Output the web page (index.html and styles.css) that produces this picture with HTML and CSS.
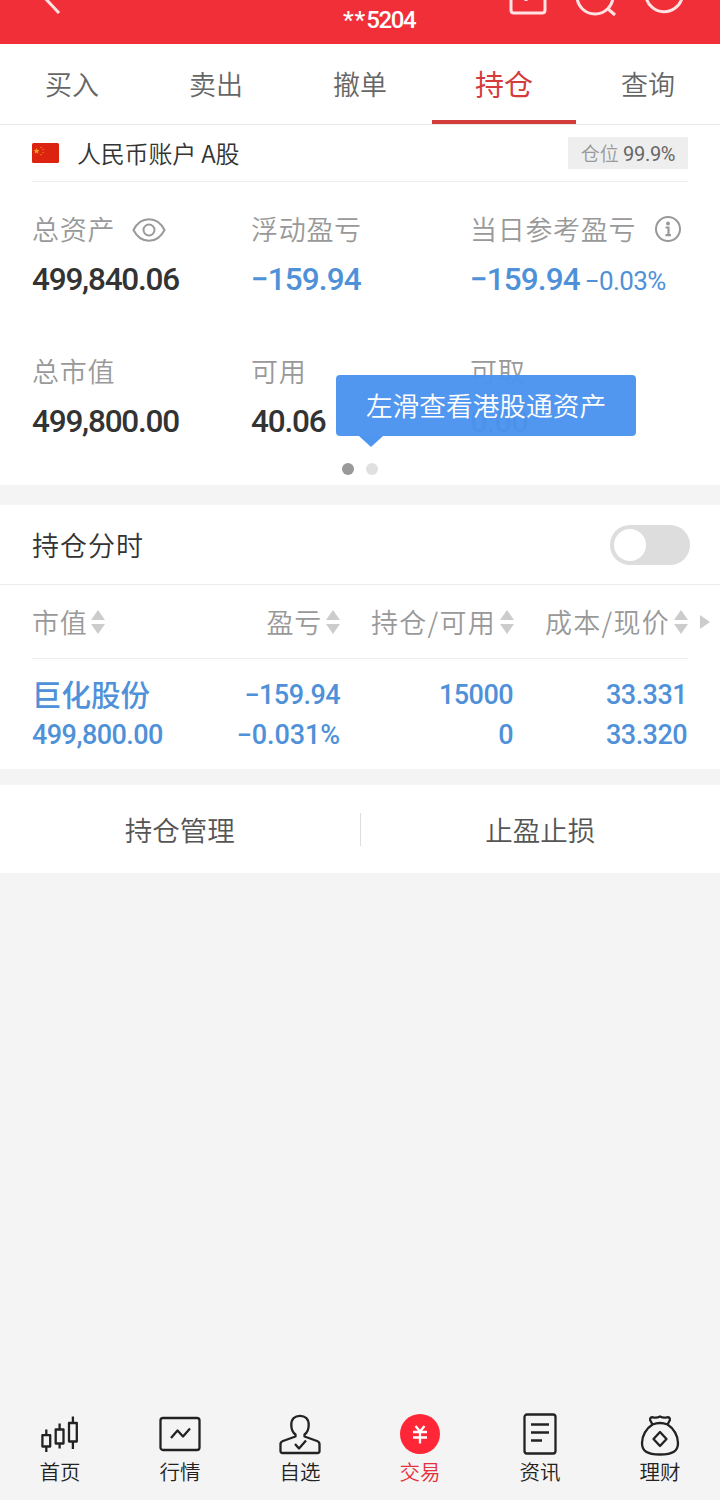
FILE: index.html
```html
<!DOCTYPE html>
<html lang="zh-CN">
<head>
<meta charset="utf-8">
<title>持仓</title>
<link rel="stylesheet" href="styles.css">
</head>
<body>
<div class="app">
  <header class="header">
    <svg class="header-art" width="720" height="44" viewBox="0 0 720 44" fill="none" stroke="#ffe3e3" stroke-width="3">
      <path d="M43-4L59 13"/>
      <path d="M511-5V10q0 3 3 3H542q3 0 3-3V-5M526 0v1"/>
      <circle cx="595" cy="-4" r="18"/><path d="M607 8l8 7"/>
      <path d="M646-3a18.500 18.500 0 0 0 36 1"/>
    </svg>
    <span class="account-no"><span class="stars">**</span>5204</span>
  </header>
  <nav class="tabs">
    <a class="tab">买入</a><a class="tab">卖出</a><a class="tab">撤单</a><a class="tab active">持仓</a><a class="tab">查询</a>
  </nav>
  <section class="assets">
    <div class="account">
      <svg class="flag" width="27" height="20" viewBox="0 0 27 20"><rect width="27" height="20" rx="1.500" fill="#dc2310"/><path d="M4.500 5l.9 2.100 2.300.1-1.800 1.400.6 2.200-2-1.200-1.900 1.200.6-2.200L1.500 7.200l2.200-.1z" fill="#f5a31a"/><g fill="#e77b19"><circle cx="9" cy="4.500" r=".8"/><circle cx="11.200" cy="6.500" r=".8"/><circle cx="11.200" cy="9.500" r=".8"/><circle cx="9" cy="11.800" r=".8"/></g></svg>
      <span class="account-name">人民币账户 A股</span>
      <span class="position">仓位 <b class="position-value">99.9%</b></span>
    </div>
    <div class="stats">
      <div class="stat"><div class="label"><span>总资产</span><svg class="eye" width="34" height="26" viewBox="0 0 34 26" fill="none" stroke="#999" stroke-width="2"><path d="M1.500 13C5 6 10.500 2.200 17 2.200S29 6 32.500 13C29 20 23.500 23.800 17 23.800S5 20 1.500 13z"/><circle cx="17" cy="13" r="5.500"/></svg></div><div class="value">499,840.06</div></div>
      <div class="stat"><div class="label"><span>浮动盈亏</span></div><div class="value blue">−159.94</div></div>
      <div class="stat"><div class="label"><span>当日参考盈亏</span><svg class="info" width="28" height="28" viewBox="0 0 28 28" fill="none" stroke="#999" stroke-width="2"><circle cx="14" cy="14" r="12"/><circle cx="14" cy="8.500" r="2" fill="#999" stroke="none"/><path d="M11.500 12.500H14.500V20M11.500 20.200h5.500" stroke-width="2.200"/></svg></div><div class="value blue">−159.94<span class="rate">−0.03%</span></div></div>
      <div class="stat"><div class="label"><span>总市值</span></div><div class="value">499,800.00</div></div>
      <div class="stat"><div class="label"><span>可用</span></div><div class="value">40.06</div></div>
      <div class="stat"><div class="label"><span>可取</span></div><div class="value covered">0.00</div></div>
    </div>
    <div class="dots"><i class="dot on"></i><i class="dot"></i></div>
    <div class="tooltip"><span>左滑查看港股通资产</span></div>
  </section>
  <section class="holdings">
    <div class="switch-row"><span>持仓分时</span><span class="switch"></span></div>
    <div class="columns">
      <span class="col">市值<svg class="sort" width="14" height="24" viewBox="0 0 14 24"><path d="M7 0l7 10H0zM0 14h14l-7 10z"/></svg></span>
      <span class="col">盈亏<svg class="sort" width="14" height="24" viewBox="0 0 14 24"><path d="M7 0l7 10H0zM0 14h14l-7 10z"/></svg></span>
      <span class="col wide">持仓/可用<svg class="sort" width="14" height="24" viewBox="0 0 14 24"><path d="M7 0l7 10H0zM0 14h14l-7 10z"/></svg></span>
      <span class="col wide">成本/现价<svg class="sort" width="14" height="24" viewBox="0 0 14 24"><path d="M7 0l7 10H0zM0 14h14l-7 10z"/></svg></span>
      <svg class="more" width="10" height="14" viewBox="0 0 10 14"><path d="M0 0l10 7-10 7z"/></svg>
    </div>
    <div class="stock">
      <span class="stock-name">巨化股份</span><span>−159.94</span><span>15000</span><span>33.331</span>
      <span>499,800.00</span><span class="percent">−0.031%</span><span>0</span><span>33.320</span>
    </div>
  </section>
  <section class="actions"><a class="action">持仓管理</a><a class="action">止盈止损</a></section>
  <nav class="bottom">
    <a class="item"><svg class="icon" width="44" height="44" viewBox="0 0 44 44"><path d="M4.400 23.200h7.800v11.300H4.400zM17.700 17.500h7.800v14h-7.800zM31 11h7.800v18.500H31zM8.300 17.500v5.700M8.300 34.500v5.500M21.600 11.500v6M21.600 31.500v5M34.900 4.500v6.500M34.900 29.500v7.500"/></svg>首页</a>
    <a class="item"><svg class="icon" width="44" height="44" viewBox="0 0 44 44"><rect x="2.500" y="6" width="39" height="32" rx="2.500"/><path d="M13 26l6.500-7.500 5.500 6 7-8"/></svg>行情</a>
    <a class="item"><svg class="icon" width="44" height="44" viewBox="0 0 44 44"><path d="M17.500 22.500C14 20 13.300 17 13.300 13c0-6 3.500-9.200 8.700-9.200s8.700 3.200 8.700 9.200c0 4-.7 7-4.200 9.500v2l12.500 4.500q2.500 1 2.500 3v7q0 2-2 2H4.500q-2 0-2-2v-7q0-2 2.500-3l12.500-4.500z"/><path d="M17 32l4 4.500 7-8"/></svg>自选</a>
    <a class="item current"><svg class="icon" width="44" height="44" viewBox="0 0 44 44"><circle cx="22" cy="22" r="20" fill="#ff2737" stroke="none"/><path d="M17.500 14l4.500 5.500 4.500-5.500M15 20h14M15 25.500h14M22 19.500v12" stroke="#fff"/></svg>交易</a>
    <a class="item"><svg class="icon" width="44" height="44" viewBox="0 0 44 44"><rect x="6.500" y="2.500" width="31" height="39" rx="2.500"/><path d="M13 12.500h18M13 20.500h18M13 28.500h11"/></svg>资讯</a>
    <a class="item"><svg class="icon" width="44" height="44" viewBox="0 0 44 44"><path d="M14.500 12.500l-2.300-4.300Q11.500 5 15 5.300q4 .8 7-.8 3 1.600 7 .8 3.500-.3 2.800 2.900l-2.300 4.300M14.500 12.500Q22 9.500 29.500 12.500C36 16.500 40 24 40 31c0 8-5 11.500-18 11.500S4 39 4 31c0-7 4-14.500 10.500-18.500z"/><path d="M22 20l6.500 7-6.500 7-6.500-7z"/></svg>理财</a>
  </nav>
</div>
</body>
</html>
```
FILE: styles.css
```css
* { box-sizing: border-box; }
body { margin: 0; background: #f4f4f4; font-family: "Noto Sans CJK SC", sans-serif; font-weight: 350; color: #333; }
.app { width: 720px; height: 1500px; display: flex; flex-direction: column; overflow: hidden; }
.header { position: relative; height: 44px; background: #f12f38; color: #fff; text-align: center; padding-left: 38px; }
.header-art { position: absolute; left: 0; top: 0; }
.account-no { font: 500 24px/40px Roboto, sans-serif; letter-spacing: -1.4px; }
.stars { letter-spacing: 1px; }
.tabs { display: flex; height: 81px; background: #fff; border-bottom: 1px solid #e8e8e8; }
.tab { flex: 1; text-align: center; font-size: 27px; line-height: 80px; color: #666; }
.tab.active { color: #d43c3c; font-size: 29px; line-height: 78px; font-weight: 400; border-bottom: 4px solid #d43c3c; }
.assets { position: relative; height: 360px; background: #fff; padding: 0 32px; }
.account { height: 57px; display: flex; align-items: center; border-bottom: 1px solid #ececec; }
.account-name { margin-left: 18px; font-size: 24px; line-height: 36px; letter-spacing: -.2px; }
.position { margin-left: auto; width: 120px; height: 32px; line-height: 32px; background: #eee; text-align: center; font-size: 19px; color: #999; white-space: nowrap; }
.position-value { font: 400 20px Roboto, sans-serif; color: #666; letter-spacing: -.3px; }
.stats { display: grid; grid-template-columns: 219px 219px 1fr; grid-template-rows: 142px 142px; padding-top: 26px; }
.label { height: 42px; display: flex; align-items: center; font-size: 27px; line-height: 40px; letter-spacing: .7px; color: #999; white-space: nowrap; }
.eye { margin: 2px 0 0 17px; }
.info { margin: 0 0 0 18px; }
.value { padding-top: 2px; font: 500 31.500px/56px Roboto, sans-serif; letter-spacing: -1.200px; white-space: nowrap; }
.value.blue { letter-spacing: -.9px; }
.covered { color: #777; }
.blue { color: #4f91d9; }
.rate { margin-left: 5px; font-size: 26px; font-weight: 400; letter-spacing: -.6px; }
.dots { position: absolute; left: 342px; bottom: 10px; display: flex; gap: 12px; }
.dot { width: 12px; height: 12px; border-radius: 50%; background: #e0e0e0; }
.dot.on { background: #999; }
.tooltip { position: absolute; left: 336px; top: 250px; width: 300px; height: 61px; border-radius: 4px; background: rgba(75, 147, 238, .96); color: #fff; font-size: 26.700px; line-height: 59px; text-align: center; }
.tooltip::after { content: ""; position: absolute; left: 23px; top: 61px; border: 12px solid transparent; border-top: 11px solid #4e95ee; border-bottom: 0; }
.holdings { margin-top: 20px; height: 264px; background: #fff; }
.switch-row { height: 80px; padding: 0 30px 0 32px; display: flex; align-items: center; justify-content: space-between; font-size: 27px; letter-spacing: 1px; border-bottom: 1px solid #ececec; }
.switch { width: 80px; height: 40px; border-radius: 20px; padding: 4px; background: #ddd; }
.switch::before { content: ""; display: block; width: 32px; height: 32px; border-radius: 50%; background: #fff; }
.columns { position: relative; height: 74px; margin: 0 32px; display: grid; grid-template-columns: 134px 174px 174px 1fr; align-items: center; border-bottom: 1px solid #ececec; font-size: 27px; color: #999; }
.col { display: flex; align-items: center; justify-content: flex-end; white-space: nowrap; letter-spacing: .7px; }
.col.wide { letter-spacing: 1.300px; }
.col:first-child { justify-content: flex-start; }
.sort { margin-left: 4px; fill: #ccc; }
.more { position: absolute; right: -22px; top: 30px; fill: #ccc; }
.stock { padding: 16px 33px 0 32px; display: grid; grid-template-columns: 134px 174px 173px 1fr; grid-auto-rows: 40px; text-align: right; font: 500 27px/41px Roboto, sans-serif; letter-spacing: -.55px; color: #4f91d9; }
.stock > :nth-child(4n+1) { text-align: left; }
.stock .percent { letter-spacing: -.1px; }
.stock .stock-name { font: 500 29.500px/37px "Noto Sans CJK SC", sans-serif; letter-spacing: 0; }
.actions { display: flex; margin-top: 16px; height: 88px; background: #fff; align-items: center; }
.action { flex: 1; text-align: center; font-size: 27.500px; color: #555; line-height: 33px; }
.action + .action { border-left: 1px solid #ddd; }
.bottom { margin-top: auto; height: 88px; display: flex; }
.item { flex: 1; display: flex; flex-direction: column; align-items: center; font-size: 20.500px; line-height: 30px; color: #222; }
.icon { fill: none; stroke: #222; stroke-width: 2.300; stroke-linejoin: round; }
.current { color: #e4303c; }
```
